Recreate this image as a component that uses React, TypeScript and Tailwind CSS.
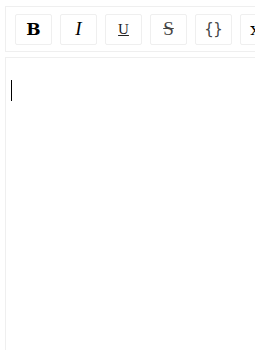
import React from 'react';

const buttons = [
  { label: 'B', cls: 'font-bold text-[17px] text-black' },
  { label: 'I', cls: 'italic text-[19px] text-black font-["Liberation_Serif",serif]' },
  { label: 'U', cls: 'underline text-[15px] text-[#222] font-["Liberation_Serif",serif]' },
  { label: 'S', cls: 'line-through text-[19px] text-[#444] font-["Liberation_Serif",serif]' },
  { label: '{}', cls: 'text-[15px] text-[#444] font-["DejaVu_Sans_Mono",monospace]' },
  { label: 'x²', cls: 'text-[17px] text-black' },
  { label: '≡', cls: 'text-[16px] text-black' },
];

function App() {
  return (
    <div className="w-screen h-screen overflow-hidden bg-white font-['DejaVu_Serif',serif]">
      <div className="w-[420px] pt-[6px] pl-[5px]">
        <div className="flex gap-2 border border-[#efefef] pl-[9px] pt-[7px] pb-[6px]">
          {buttons.map((b) => (
            <button
              key={b.label}
              className={`w-[37px] h-[31px] shrink-0 flex items-center justify-center border border-[#efefef] rounded-[2px] bg-white ${b.cls}`}
            >
              {b.label}
            </button>
          ))}
        </div>
        <div className="mt-[5px] h-[320px] border border-[#efefef] pl-[5px] pt-[22px]">
          <div className="w-[1px] h-[21px] bg-black" />
        </div>
      </div>
    </div>
  );
}

export default App;
